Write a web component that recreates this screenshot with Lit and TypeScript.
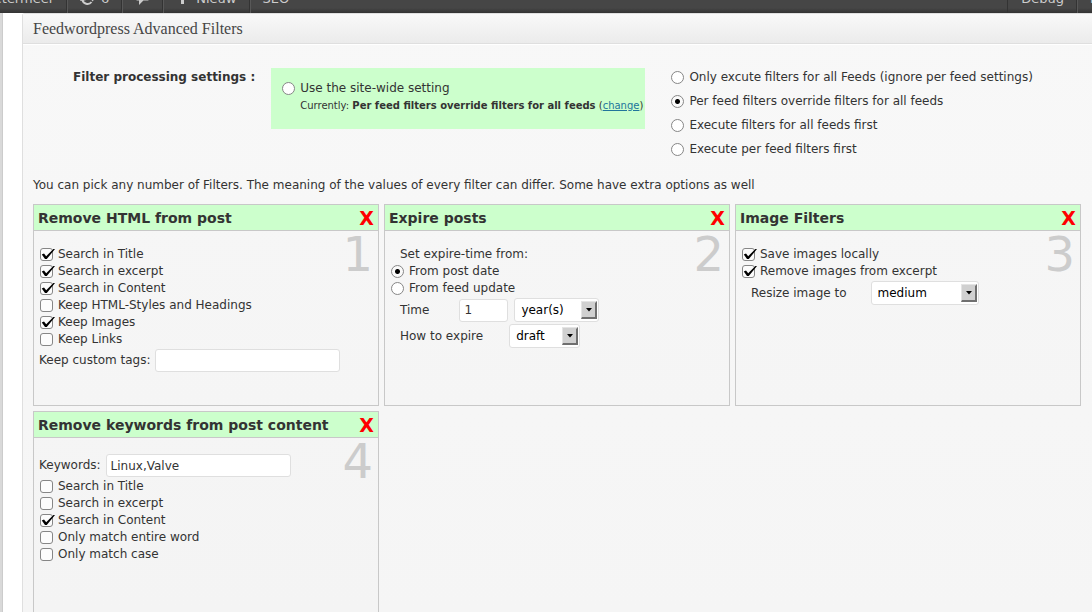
import { LitElement, html, css, svg } from "lit";
import { customElement, property } from "lit/decorators.js";

interface Option {
  label: string;
  checked?: boolean;
}

const controlStyles = css`
  .option {
    display: flex;
    align-items: center;
    gap: 5px;
    height: 17px;
    margin-left: 1px;
    white-space: nowrap;
  }
  .box {
    display: grid;
    width: 13px;
    height: 13px;
    flex: none;
  }
  .box > * {
    grid-area: 1 / 1;
  }
  .check,
  .radio {
    appearance: none;
    box-sizing: border-box;
    width: 13px;
    height: 13px;
    margin: 0;
    border: 1px solid #868686;
    border-radius: 3px;
    background: #fcfcfc;
    flex: none;
  }
  .radio {
    border-radius: 50%;
    background: #fff;
  }
  .radio:checked {
    background: radial-gradient(circle, #000 2px, #fafafa 3px);
  }
  .mark {
    display: none;
    overflow: visible;
    pointer-events: none;
  }
  .check:checked + .mark {
    display: block;
  }
`;

const checkMark = svg`<path d="M1.8 6.6 L4 5.6 L6.2 8.2 L13.4 0.9 L15 1.1 L6.8 11 L5 11 Z" fill="#000"></path>`;

const checkbox = (o: Option) => html`
  <label class="option">
    <span class="box">
      <input class="check" type="checkbox" .checked=${!!o.checked} />
      <svg class="mark" width="13" height="13" viewBox="0 0 13 13">${checkMark}</svg>
    </span>
    <span>${o.label}</span>
  </label>
`;

const radio = (name: string, o: Option) => html`
  <label class="option">
    <input class="radio" type="radio" name=${name} .checked=${!!o.checked} />
    <span>${o.label}</span>
  </label>
`;

@customElement("admin-bar")
export class AdminBar extends LitElement {
  static styles = css`
    :host {
      display: flex;
      align-items: flex-end;
      height: 13px;
      overflow: hidden;
      flex: none;
    }
    .bar {
      display: flex;
      flex: 1;
      min-width: 0;
      height: 28px;
      background: linear-gradient(to top, #333 0, #464646 5px);
      color: #ccc;
      font-size: 13px;
      line-height: 28px;
    }
    .item {
      display: flex;
      align-items: center;
      gap: 6px;
      box-sizing: border-box;
      padding: 0 12px 0 13px;
      border-right: 1px solid #333;
      box-shadow: 1px 0 #585858;
      color: inherit;
      text-decoration: none;
      white-space: nowrap;
    }
    .site {
      justify-content: flex-end;
      width: 67px;
      flex: none;
    }
    .last {
      border-right: 0;
      box-shadow: none;
    }
    .new {
      padding-left: 15px;
      gap: 9px;
    }
    .right {
      display: flex;
      margin-left: auto;
      border-left: 1px solid #333;
    }
    .cut {
      width: 15px;
      overflow: hidden;
      border-right: 0;
      padding-right: 0;
    }
    svg {
      display: block;
      flex: none;
    }
  `;

  render() {
    return html`
      <nav class="bar">
        <a class="item site" href="#">etermeer</a>
        <a class="item" href="#">
          <svg width="15" height="14" viewBox="0 0 15 14">
            <path d="M4 3.6 A5 5 0 0 1 12.5 6.5 M2.5 7.5 A5 4.8 0 0 0 11.5 10" fill="none" stroke="#ccc" stroke-width="2"></path>
            <path d="M0 9 L2 5.4 L5.8 8.2 Z M9.5 6 L15 5.6 L12.8 9.4 Z" fill="#ccc"></path>
          </svg>
          6
        </a>
        <a class="item" href="#" aria-label="Comments">
          <svg width="15" height="14" viewBox="0 0 15 14">
            <path d="M3 0 H12 Q14.5 0 14.5 3 V6 Q14.5 8.6 12 8.6 H8.4 L4 13 V8.6 H3 Q0.5 8.6 0.5 6 V3 Q0.5 0 3 0 Z" fill="#ccc"></path>
          </svg>
        </a>
        <a class="item new" href="#">
          <svg width="9" height="10" viewBox="0 0 9 10">
            <path d="M3 0 H6 V3 H9 V6 H6 V10 H3 V6 H0 V3 H3 Z" fill="#ccc"></path>
          </svg>
          Nieuw
        </a>
        <a class="item last" href="#">SEO</a>
        <div class="right">
          <a class="item" href="#">Debug</a>
          <a class="item cut" href="#">I</a>
        </div>
      </nav>
    `;
  }
}

@customElement("drop-down")
export class DropDown extends LitElement {
  @property() value = "";
  @property() label = "";
  @property({ type: Array }) options: string[] = [];

  static styles = css`
    :host {
      display: grid;
      align-items: center;
    }
    .select {
      grid-area: 1 / 1;
      appearance: none;
      box-sizing: border-box;
      height: 24px;
      margin: 0;
      padding: 0 34px 0 6px;
      border: 1px solid #dfdfdf;
      border-radius: 3px;
      background: #fff;
      color: #000;
      font: inherit;
    }
    .arrow {
      grid-area: 1 / 1;
      justify-self: end;
      margin-right: 2px;
      pointer-events: none;
    }
  `;

  render() {
    return html`
      <select class="select" aria-label=${this.label}>
        ${this.options.map((o) => html`<option ?selected=${o === this.value}>${o}</option>`)}
      </select>
      <svg class="arrow" width="16" height="18" viewBox="0 0 16 18">
        <rect width="16" height="18" fill="#6f6f6f"></rect>
        <path d="M0 0 H16 L14 2 H1 V16 L0 18 Z" fill="#e4e4e4"></path>
        <rect x="1" y="1" width="13" height="15" fill="#d0d0d0"></rect>
        <path d="M5 7 H11 L8 10.5 Z" fill="#000"></path>
      </svg>
    `;
  }
}

@customElement("filter-card")
export class FilterCard extends LitElement {
  @property() heading = "";
  @property({ type: Number }) number = 1;

  static styles = css`
    :host {
      display: block;
      box-sizing: border-box;
      min-width: 0;
      min-height: 202px;
      border: 1px solid #c8c8c8;
      background: rgba(0, 0, 0, 0.004);
    }
    .head {
      display: flex;
      align-items: center;
      justify-content: space-between;
      height: 25px;
      padding: 0 4px;
      border-bottom: 1px solid #c8c8c8;
      background: #cfc;
    }
    .title {
      margin: 0;
      font-size: 14px;
      line-height: 24px;
      white-space: nowrap;
    }
    .remove {
      margin: 0;
      padding: 0;
      border: 0;
      background: none;
      color: #f00;
      font: bold 19px/24px "DejaVu Sans", sans-serif;
    }
    .body {
      display: flex;
      align-items: flex-start;
      padding: 0 5px;
    }
    .content {
      flex: 1;
      min-width: 0;
      padding-top: 15px;
    }
    .number {
      color: #ccc;
      font-size: 48px;
      line-height: 46px;
    }
  `;

  render() {
    return html`
      <header class="head">
        <h4 class="title">${this.heading}</h4>
        <button class="remove" type="button">X</button>
      </header>
      <div class="body">
        <div class="content"><slot></slot></div>
        <span class="number">${this.number}</span>
      </div>
    `;
  }
}

@customElement("app-root")
export class AppRoot extends LitElement {
  static styles = [
    controlStyles,
    css`
      :host {
        display: flex;
        flex-direction: column;
        height: 100vh;
        overflow: hidden;
        background: #fff;
        color: #333;
        font-family: "DejaVu Sans", sans-serif;
        font-size: 12px;
        line-height: 17px;
      }
      .page {
        display: flex;
        flex: 1;
        min-height: 0;
      }
      .menu {
        width: 2px;
        flex: none;
        border-right: 1px solid #ccc;
        background: #d9d9d9;
      }
      .postbox {
        display: flex;
        flex-direction: column;
        flex: 1;
        min-width: 0;
        margin-left: 19px;
        border: 1px solid #dfdfdf;
        border-width: 1px 0 0 1px;
        border-top-left-radius: 3px;
        background: linear-gradient(#f8f8f8, #f5f5f5);
      }
      .title {
        margin: 0;
        padding: 0 10px;
        border-bottom: 1px solid #dfdfdf;
        box-shadow: 0 1px #fff;
        background: linear-gradient(#f9f9f9, #ebebeb);
        color: #464646;
        font: normal 16px/29px "Liberation Serif", serif;
      }
      .inside {
        display: flex;
        flex-direction: column;
        flex: 1;
        padding: 21px 11px 0 10px;
      }
      .settings {
        display: flex;
        align-items: flex-start;
        padding-left: 40px;
        white-space: nowrap;
      }
      .name {
        margin-right: 16px;
        font-weight: bold;
        line-height: 24px;
      }
      .sitewide {
        margin: 3px 26px 0 0;
        padding: 12px 2px 15px 10px;
        background: #cfc;
      }
      .current {
        margin-left: 19px;
        font-size: 10px;
        line-height: 17px;
      }
      .link {
        color: #21759b;
      }
      .choices .option {
        height: 24px;
        margin-left: 0;
      }
      .intro {
        margin: 16px 0 10px;
      }
      .cards {
        display: grid;
        grid-template-columns: repeat(3, minmax(0, 1fr));
        grid-template-rows: auto minmax(240px, 1fr);
        gap: 5px;
        flex: 1;
      }
      .field {
        display: flex;
        align-items: center;
        margin: 1px 0;
        white-space: nowrap;
      }
      .indent,
      .line {
        margin-left: 10px;
      }
      .text {
        box-sizing: border-box;
        width: 185px;
        height: 23px;
        margin: 0 0 0 5px;
        padding: 0 4px;
        border: 1px solid #dfdfdf;
        border-radius: 3px;
        background: #fff;
        color: #333;
        font: inherit;
      }
      .count {
        width: 49px;
        margin: 0 6px 0 30px;
      }
      .pick {
        margin-left: 26px;
      }
      .wide {
        width: 108px;
        margin-left: 24px;
      }
      .form {
        display: flex;
        flex-direction: column;
        align-items: flex-start;
      }
    `,
  ];

  render() {
    return html`
      <admin-bar></admin-bar>
      <div class="page">
        <div class="menu"></div>
        <main class="postbox">
          <h3 class="title">Feedwordpress Advanced Filters</h3>
          <div class="inside">
            <section class="settings">
              <span class="name">Filter processing settings :</span>
              <div class="sitewide">
                ${radio("mode", { label: "Use the site-wide setting" })}
                <div class="current">
                  Currently: <b>Per feed filters override filters for all feeds</b>
                  (<a class="link" href="#">change</a>)
                </div>
              </div>
              <div class="choices">
                ${[
                  { label: "Only excute filters for all Feeds (ignore per feed settings)" },
                  { label: "Per feed filters override filters for all feeds", checked: true },
                  { label: "Execute filters for all feeds first" },
                  { label: "Execute per feed filters first" },
                ].map((o) => radio("mode", o))}
              </div>
            </section>
            <p class="intro">
              You can pick any number of Filters. The meaning of the values of every filter can differ. Some have extra
              options as well
            </p>
            <section class="cards">
              <filter-card heading="Remove HTML from post" number="1">
                <div class="form">
                  ${[
                    { label: "Search in Title", checked: true },
                    { label: "Search in excerpt", checked: true },
                    { label: "Search in Content", checked: true },
                    { label: "Keep HTML-Styles and Headings" },
                    { label: "Keep Images", checked: true },
                    { label: "Keep Links" },
                  ].map(checkbox)}
                  <div class="field">
                    <label for="tags">Keep custom tags:</label>
                    <input class="text" id="tags" type="text" />
                  </div>
                </div>
              </filter-card>
              <filter-card heading="Expire posts" number="2">
                <div class="form">
                  <span class="line">Set expire-time from:</span>
                  ${radio("from", { label: "From post date", checked: true })}
                  ${radio("from", { label: "From feed update" })}
                  <div class="field indent">
                    <label for="time">Time</label>
                    <input class="text count" id="time" type="text" value="1" />
                    <drop-down label="Time unit" value="year(s)" .options=${["year(s)"]}></drop-down>
                  </div>
                  <div class="field indent">
                    <span>How to expire</span>
                    <drop-down class="pick" label="How to expire" value="draft" .options=${["draft"]}></drop-down>
                  </div>
                </div>
              </filter-card>
              <filter-card heading="Image Filters" number="3">
                <div class="form">
                  ${[
                    { label: "Save images locally", checked: true },
                    { label: "Remove images from excerpt", checked: true },
                  ].map(checkbox)}
                  <div class="field indent">
                    <span>Resize image to</span>
                    <drop-down
                      class="wide"
                      label="Resize image to"
                      value="medium"
                      .options=${["medium"]}
                    ></drop-down>
                  </div>
                </div>
              </filter-card>
              <filter-card heading="Remove keywords from post content" number="4">
                <div class="form">
                  <div class="field">
                    <label for="keywords">Keywords:</label>
                    <input class="text" id="keywords" type="text" value="Linux,Valve" />
                  </div>
                  ${[
                    { label: "Search in Title" },
                    { label: "Search in excerpt" },
                    { label: "Search in Content", checked: true },
                    { label: "Only match entire word" },
                    { label: "Only match case" },
                  ].map(checkbox)}
                </div>
              </filter-card>
            </section>
          </div>
        </main>
      </div>
    `;
  }
}
